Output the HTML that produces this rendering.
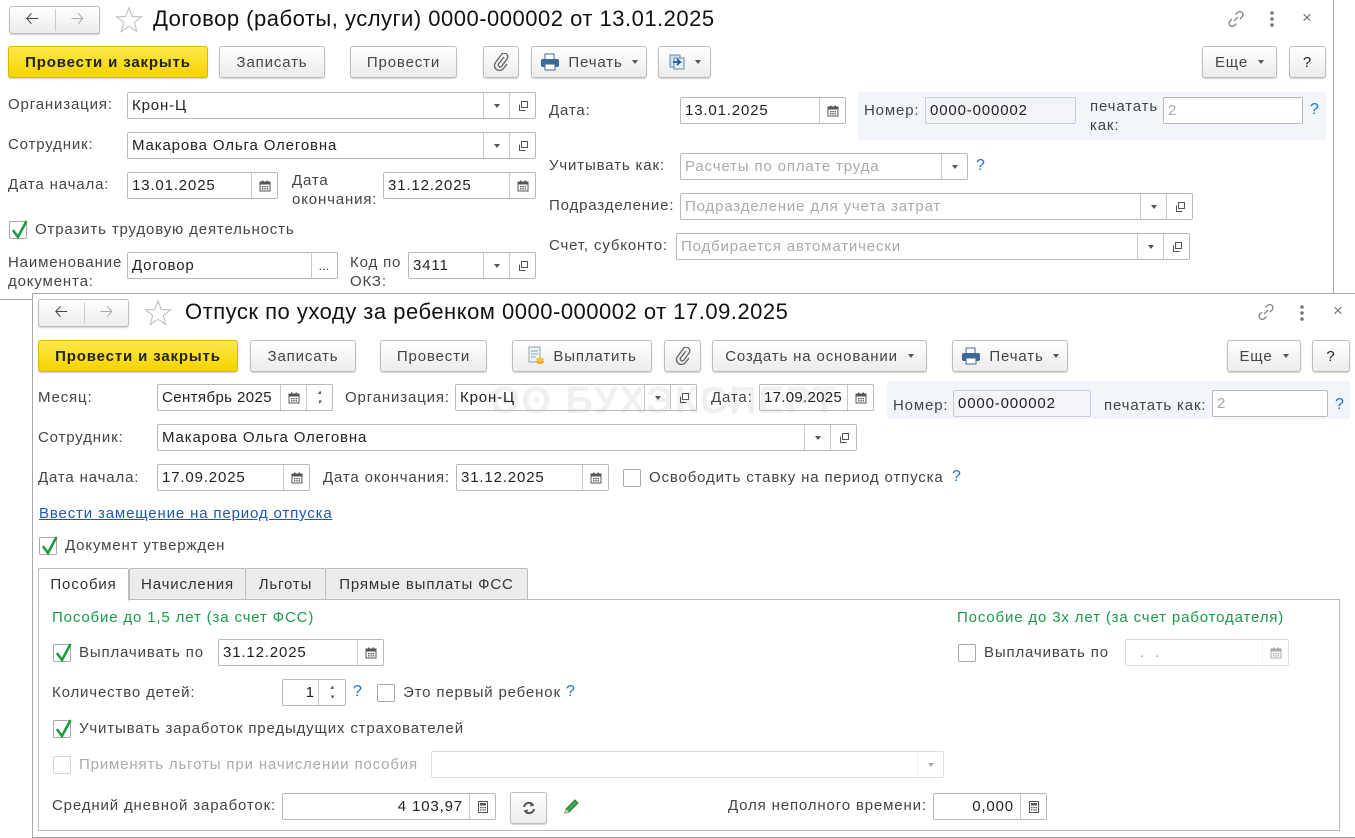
<!DOCTYPE html>
<html><head><meta charset="utf-8">
<style>
*{box-sizing:border-box;margin:0;padding:0}
body{width:1355px;height:829px;background:#fff;position:relative;overflow:hidden;font-family:"Liberation Sans",Arial,sans-serif;font-size:15px;color:#333;letter-spacing:0.85px}
.a{position:absolute;white-space:nowrap}
.win{position:absolute;background:#fff;border:1px solid #a8a8a8}
.b{position:absolute;height:32px;border:1px solid #bdbdbd;border-radius:3px;background:linear-gradient(#fff,#ececec);box-shadow:0 1px 1px rgba(0,0,0,.18);display:flex;align-items:center;justify-content:center;color:#444;font-size:15px}
.y{background:linear-gradient(#ffe94a,#f4d300);border-color:#d8b700;color:#222;font-weight:bold}
.f{position:absolute;height:27px;border:1px solid #b9b9b9;border-radius:2px;background:#fff;padding-left:4px;line-height:25px;color:#222;overflow:hidden;white-space:nowrap}
.f i{position:absolute;top:0;height:25px;width:26px;border-left:1px solid #c8c8c8;display:flex;align-items:center;justify-content:center;letter-spacing:0}
.ph{color:#aaa}
.cb{position:absolute;width:18px;height:18px;border:1px solid #a8a8a8;border-radius:2px;background:#fff}
.cb svg{position:absolute;left:1px;top:-3px}
.q{position:absolute;color:#1a73c8;font-size:16px}
.lab{position:absolute;color:#444;white-space:nowrap}
.grn{position:absolute;color:#1a9a4a;white-space:nowrap}
.dd{width:0;height:0;border-left:3.5px solid transparent;border-right:3.5px solid transparent;border-top:4px solid #555}
.tab{position:absolute;top:568px;height:32px;border:1px solid #bcbcbc;background:#ececec;display:flex;align-items:center;justify-content:center;color:#333;border-radius:2px 2px 0 0}
.tt{position:absolute;font-size:22px;color:#111;letter-spacing:0.5px;white-space:nowrap}
</style></head><body>

<svg width="0" height="0" style="position:absolute">
<defs>
<symbol id="cal" viewBox="0 0 12 12"><rect x="1" y="2" width="10" height="9" fill="#fff" stroke="#555"/><rect x="1" y="2" width="10" height="2.5" fill="#555"/><rect x="3" y="0.5" width="1.5" height="3" fill="#555"/><rect x="7.5" y="0.5" width="1.5" height="3" fill="#555"/><g fill="#555"><rect x="3" y="6" width="1.5" height="1.3"/><rect x="5.3" y="6" width="1.5" height="1.3"/><rect x="7.6" y="6" width="1.5" height="1.3"/><rect x="3" y="8.2" width="1.5" height="1.3"/><rect x="5.3" y="8.2" width="1.5" height="1.3"/><rect x="7.6" y="8.2" width="1.5" height="1.3"/></g></symbol>
<symbol id="op" viewBox="0 0 12 12"><rect x="4.5" y="1.5" width="6" height="6" fill="#fff" stroke="#555"/><path d="M2.5 4.5v6h6" fill="none" stroke="#555"/></symbol>
<symbol id="chk" viewBox="0 0 18 22"><path d="M2.5 12 L7 18 L15 3" fill="none" stroke="#1b9b3c" stroke-width="2.6" stroke-linecap="round"/></symbol>
<symbol id="clc" viewBox="0 0 12 12"><rect x="1.5" y="0.5" width="9" height="11" fill="#fff" stroke="#555"/><rect x="3" y="2" width="6" height="2.5" fill="#555"/><g fill="#555"><rect x="3" y="6" width="1.5" height="1.2"/><rect x="5.3" y="6" width="1.5" height="1.2"/><rect x="7.5" y="6" width="1.5" height="1.2"/><rect x="3" y="8.3" width="1.5" height="1.2"/><rect x="5.3" y="8.3" width="1.5" height="1.2"/><rect x="7.5" y="8.3" width="1.5" height="1.2"/></g></symbol>
<symbol id="prn" viewBox="0 0 20 18"><rect x="5" y="1" width="9" height="6" fill="#fff" stroke="#4a6a8a"/><rect x="1" y="6" width="18" height="8" rx="2" fill="#3a6a9a"/><rect x="5" y="11" width="10" height="6" fill="#fff" stroke="#4a6a8a"/></symbol>
<symbol id="clip" viewBox="0 0 16 18"><path d="M11 4 L5.5 11 a2 2 0 0 0 3 2.5 L14 6 a3.5 3.5 0 0 0 -5.5 -4.5 L2.5 9.5 a5 5 0 0 0 8 6 L14 11" fill="none" stroke="#666" stroke-width="1.4"/></symbol>
<symbol id="star" viewBox="0 0 28 28"><path d="M14 2 L17.3 10.5 L26.5 10.8 L19.3 16.5 L21.8 25.5 L14 20.3 L6.2 25.5 L8.7 16.5 L1.5 10.8 L10.7 10.5 Z" fill="none" stroke="#c4c4c4" stroke-width="1.2"/></symbol>
<symbol id="lnk" viewBox="0 0 20 20"><path d="M8 12 L12 8 M9.5 5.5 l2-2 a3 3 0 0 1 4.5 4.5 l-2 2 M10.5 14.5 l-2 2 a3 3 0 0 1 -4.5 -4.5 l2 -2" fill="none" stroke="#888" stroke-width="1.4"/></symbol>
</defs>
</svg>

<!-- WINDOW 1 -->
<div class="win" style="left:0;top:0;width:1334px;height:300px;border-top:none;border-left:none"></div>
<div class="b" style="left:9px;top:6px;width:91px;height:28px;padding:0"><span style="position:absolute;left:0;width:45px;text-align:center;font-size:17px;color:#444">&#129120;</span><span style="position:absolute;left:45px;top:2px;bottom:2px;border-left:1px solid #ccc"></span><span style="position:absolute;left:46px;width:44px;text-align:center;font-size:17px;color:#aaa">&#129122;</span></div>
<svg class="a" style="left:115px;top:6px" width="28" height="28"><use href="#star"/></svg>
<div class="tt" style="left:153px;top:6px">Договор (работы, услуги) 0000-000002 от 13.01.2025</div>
<svg class="a" style="left:1226px;top:9px" width="20" height="20"><use href="#lnk"/></svg>
<div class="a" style="left:1270px;top:10px;width:4px;height:18px;background:radial-gradient(circle,#777 1.6px,transparent 2px) 0 0/4px 6px"></div>
<div class="a" style="left:1302px;top:8px;font-size:17px;color:#777">×</div>

<div class="b y" style="left:8px;top:46px;width:200px">Провести и закрыть</div>
<div class="b" style="left:219px;top:46px;width:106px">Записать</div>
<div class="b" style="left:350px;top:46px;width:107px">Провести</div>
<div class="b" style="left:483px;top:46px;width:36px"><svg width="16" height="18"><use href="#clip"/></svg></div>
<div class="b" style="left:531px;top:46px;width:116px"><svg width="20" height="18" style="margin-right:8px"><use href="#prn"/></svg>Печать<span class="dd" style="margin-left:9px"></span></div>
<div class="b" style="left:658px;top:46px;width:53px"><svg width="16" height="16" style="margin-right:10px"><rect x="1" y="1" width="10" height="12" fill="#cfe0f0" stroke="#6a8ab0"/><rect x="5" y="4" width="10" height="11" fill="#e8f0f8" stroke="#6a8ab0"/><path d="M4 8h7l-3-3m3 3l-3 3" stroke="#1a5aa8" stroke-width="1.8" fill="none"/></svg><span class="dd"></span></div>
<div class="b" style="left:1202px;top:46px;width:75px">Еще<span class="dd" style="margin-left:10px"></span></div>
<div class="b" style="left:1289px;top:46px;width:37px;color:#222">?</div>

<div class="lab" style="left:8px;top:96px">Организация:</div>
<div class="f" style="left:127px;top:92px;width:409px">Крон-Ц<i style="right:26px"><span class="dd"></span></i><i style="right:0"><svg width="12" height="12"><use href="#op"/></svg></i></div>
<div class="lab" style="left:8px;top:136px">Сотрудник:</div>
<div class="f" style="left:127px;top:132px;width:409px">Макарова Ольга Олеговна<i style="right:26px"><span class="dd"></span></i><i style="right:0"><svg width="12" height="12"><use href="#op"/></svg></i></div>
<div class="lab" style="left:8px;top:176px">Дата начала:</div>
<div class="f" style="left:127px;top:172px;width:151px">13.01.2025<i style="right:0"><svg width="12" height="12"><use href="#cal"/></svg></i></div>
<div class="lab" style="left:292px;top:171px;line-height:19px">Дата<br>окончания:</div>
<div class="f" style="left:383px;top:172px;width:153px">31.12.2025<i style="right:0"><svg width="12" height="12"><use href="#cal"/></svg></i></div>
<div class="cb" style="left:9px;top:221px"><svg width="18" height="22"><use href="#chk"/></svg></div>
<div class="lab" style="left:35px;top:221px">Отразить трудовую деятельность</div>
<div class="lab" style="left:8px;top:253px;line-height:19px">Наименование<br>документа:</div>
<div class="f" style="left:127px;top:252px;width:211px">Договор<i style="right:0;font-size:13px;color:#444">...</i></div>
<div class="lab" style="left:350px;top:253px;line-height:19px">Код по<br>ОКЗ:</div>
<div class="f" style="left:408px;top:252px;width:128px">3411<i style="right:26px"><span class="dd"></span></i><i style="right:0"><svg width="12" height="12"><use href="#op"/></svg></i></div>

<div class="lab" style="left:549px;top:102px">Дата:</div>
<div class="f" style="left:680px;top:97px;width:166px">13.01.2025<i style="right:0"><svg width="12" height="12"><use href="#cal"/></svg></i></div>
<div class="a" style="left:858px;top:92px;width:468px;height:48px;background:#f2f5fa"></div>
<div class="lab" style="left:864px;top:102px">Номер:</div>
<div class="f" style="left:925px;top:97px;width:151px;background:#f2f4f7;border-color:#ccd">0000-000002</div>
<div class="lab" style="left:1090px;top:97px;line-height:19px">печатать<br>как:</div>
<div class="f" style="left:1163px;top:97px;width:140px"><span class="ph">2</span></div>
<div class="q" style="left:1310px;top:101px">?</div>
<div class="lab" style="left:549px;top:157px">Учитывать как:</div>
<div class="f" style="left:680px;top:153px;width:288px"><span class="ph">Расчеты по оплате труда</span><i style="right:0"><span class="dd"></span></i></div>
<div class="q" style="left:976px;top:157px">?</div>
<div class="lab" style="left:549px;top:197px">Подразделение:</div>
<div class="f" style="left:680px;top:193px;width:513px"><span class="ph">Подразделение для учета затрат</span><i style="right:26px"><span class="dd"></span></i><i style="right:0"><svg width="12" height="12"><use href="#op"/></svg></i></div>
<div class="lab" style="left:549px;top:237px">Счет, субконто:</div>
<div class="f" style="left:676px;top:233px;width:514px"><span class="ph">Подбирается автоматически</span><i style="right:26px"><span class="dd"></span></i><i style="right:0"><svg width="12" height="12"><use href="#op"/></svg></i></div>

<!-- WINDOW 2 -->
<div class="win" style="left:32px;top:293px;width:1330px;height:545px"></div>
<div class="b" style="left:38px;top:299px;width:91px;height:28px;padding:0"><span style="position:absolute;left:0;width:45px;text-align:center;font-size:17px;color:#444">&#129120;</span><span style="position:absolute;left:45px;top:2px;bottom:2px;border-left:1px solid #ccc"></span><span style="position:absolute;left:46px;width:44px;text-align:center;font-size:17px;color:#aaa">&#129122;</span></div>
<svg class="a" style="left:144px;top:299px" width="28" height="28"><use href="#star"/></svg>
<div class="tt" style="left:185px;top:299px">Отпуск по уходу за ребенком 0000-000002 от 17.09.2025</div>
<svg class="a" style="left:1256px;top:302px" width="20" height="20"><use href="#lnk"/></svg>
<div class="a" style="left:1300px;top:304px;width:4px;height:18px;background:radial-gradient(circle,#777 1.6px,transparent 2px) 0 0/4px 6px"></div>
<div class="a" style="left:1333px;top:301px;font-size:17px;color:#777">×</div>

<div class="b y" style="left:38px;top:340px;width:200px">Провести и закрыть</div>
<div class="b" style="left:250px;top:340px;width:106px">Записать</div>
<div class="b" style="left:380px;top:340px;width:107px">Провести</div>
<div class="b" style="left:512px;top:340px;width:140px"><svg width="18" height="20" style="margin-right:8px"><rect x="2" y="1" width="11" height="15" fill="#eef2f7" stroke="#8aa"/><path d="M4 5h7M4 8h7M4 11h5" stroke="#8aa"/><ellipse cx="13" cy="16" rx="4" ry="2" fill="#e8b020"/><ellipse cx="13" cy="13.5" rx="4" ry="2" fill="#f5c840"/></svg>Выплатить</div>
<div class="b" style="left:664px;top:340px;width:37px"><svg width="16" height="18"><use href="#clip"/></svg></div>
<div class="b" style="left:712px;top:340px;width:215px">Создать на основании<span class="dd" style="margin-left:10px"></span></div>
<div class="b" style="left:952px;top:340px;width:116px"><svg width="20" height="18" style="margin-right:8px"><use href="#prn"/></svg>Печать<span class="dd" style="margin-left:9px"></span></div>
<div class="b" style="left:1227px;top:340px;width:74px">Еще<span class="dd" style="margin-left:10px"></span></div>
<div class="b" style="left:1312px;top:340px;width:38px;color:#222">?</div>

<div class="a" style="left:490px;top:380px;font-size:38px;font-weight:bold;color:#f0f0f0;letter-spacing:2px">ʘʘ&nbsp;БУХЭКСПЕРТ</div>

<div class="lab" style="left:38px;top:389px">Месяц:</div>
<div class="f" style="left:157px;top:384px;width:176px;letter-spacing:0.4px">Сентябрь 2025<i style="right:26px"><svg width="12" height="12"><use href="#cal"/></svg></i><i style="right:0;flex-direction:column;font-size:7px;color:#555;line-height:10px">▴<br>▾</i></div>
<div class="lab" style="left:345px;top:389px">Организация:</div>
<div class="f" style="left:455px;top:384px;width:242px;background:transparent">Крон-Ц<i style="right:26px"><span class="dd"></span></i><i style="right:0"><svg width="12" height="12"><use href="#op"/></svg></i></div>
<div class="lab" style="left:711px;top:389px">Дата:</div>
<div class="f" style="left:759px;top:384px;width:115px;background:transparent;letter-spacing:0.3px">17.09.2025<i style="right:0"><svg width="12" height="12"><use href="#cal"/></svg></i></div>
<div class="a" style="left:887px;top:381px;width:463px;height:38px;background:#f2f5fa"></div>
<div class="lab" style="left:893px;top:397px">Номер:</div>
<div class="f" style="left:953px;top:390px;width:138px;background:#f2f4f7;border-color:#ccd">0000-000002</div>
<div class="lab" style="left:1104px;top:397px">печатать как:</div>
<div class="f" style="left:1212px;top:390px;width:116px"><span class="ph">2</span></div>
<div class="q" style="left:1335px;top:396px">?</div>

<div class="lab" style="left:38px;top:429px">Сотрудник:</div>
<div class="f" style="left:157px;top:424px;width:700px;background:transparent">Макарова Ольга Олеговна<i style="right:26px"><span class="dd"></span></i><i style="right:0"><svg width="12" height="12"><use href="#op"/></svg></i></div>
<div class="lab" style="left:38px;top:469px">Дата начала:</div>
<div class="f" style="left:157px;top:464px;width:153px">17.09.2025<i style="right:0"><svg width="12" height="12"><use href="#cal"/></svg></i></div>
<div class="lab" style="left:323px;top:469px">Дата окончания:</div>
<div class="f" style="left:456px;top:464px;width:153px">31.12.2025<i style="right:0"><svg width="12" height="12"><use href="#cal"/></svg></i></div>
<div class="cb" style="left:623px;top:469px"></div>
<div class="lab" style="left:649px;top:469px">Освободить ставку на период отпуска</div>
<div class="q" style="left:952px;top:468px">?</div>
<div class="a" style="left:39px;top:505px;color:#1c58b0;text-decoration:underline">Ввести замещение на период отпуска</div>
<div class="cb" style="left:39px;top:537px"><svg width="18" height="22"><use href="#chk"/></svg></div>
<div class="lab" style="left:65px;top:537px">Документ утвержден</div>

<div class="a" style="left:38px;top:599px;width:1302px;height:232px;border:1px solid #bcbcbc"></div>
<div class="tab" style="left:129px;width:117px">Начисления</div>
<div class="tab" style="left:245px;width:81px">Льготы</div>
<div class="tab" style="left:325px;width:203px">Прямые выплаты ФСС</div>
<div class="tab" style="left:38px;width:91px;background:#fff;border-bottom-color:#fff;height:33px">Пособия</div>

<div class="grn" style="left:52px;top:609px">Пособие до 1,5 лет (за счет ФСС)</div>
<div class="grn" style="left:957px;top:609px">Пособие до 3х лет (за счет работодателя)</div>
<div class="cb" style="left:53px;top:644px"><svg width="18" height="22"><use href="#chk"/></svg></div>
<div class="lab" style="left:79px;top:644px">Выплачивать по</div>
<div class="f" style="left:218px;top:639px;width:166px">31.12.2025<i style="right:0"><svg width="12" height="12"><use href="#cal"/></svg></i></div>
<div class="cb" style="left:958px;top:644px"></div>
<div class="lab" style="left:984px;top:644px">Выплачивать по</div>
<div class="f" style="left:1125px;top:639px;width:164px;border-color:#ddd;color:#999">&nbsp;&nbsp;.&nbsp;&nbsp;.<i style="right:0;border-color:#e4e4e4;opacity:.5"><svg width="12" height="12"><use href="#cal"/></svg></i></div>

<div class="lab" style="left:52px;top:684px">Количество детей:</div>
<div class="f" style="left:282px;top:679px;width:64px;text-align:right;padding-right:30px">1<i style="right:0;width:27px;flex-direction:column;font-size:7px;color:#555;line-height:10px">▴<br>▾</i></div>
<div class="q" style="left:353px;top:683px">?</div>
<div class="cb" style="left:377px;top:684px"></div>
<div class="lab" style="left:403px;top:684px">Это первый ребенок</div>
<div class="q" style="left:566px;top:683px">?</div>
<div class="cb" style="left:53px;top:720px"><svg width="18" height="22"><use href="#chk"/></svg></div>
<div class="lab" style="left:79px;top:720px">Учитывать заработок предыдущих страхователей</div>
<div class="cb" style="left:53px;top:756px;border-color:#d4d4d4"></div>
<div class="lab" style="left:79px;top:756px;color:#aaa">Применять льготы при начислении пособия</div>
<div class="f" style="left:431px;top:751px;width:513px;border-color:#ddd"><i style="right:0;border-color:#e4e4e4;opacity:.5"><span class="dd"></span></i></div>

<div class="lab" style="left:52px;top:797px">Средний дневной заработок:</div>
<div class="f" style="left:282px;top:793px;width:214px;text-align:right;padding-right:32px">4 103,97<i style="right:0"><svg width="12" height="12"><use href="#clc"/></svg></i></div>
<div class="b" style="left:510px;top:792px;width:37px"><svg width="14" height="14" viewBox="0 0 14 14"><path d="M2 6 A5 5 0 0 1 11 4 M12 8 A5 5 0 0 1 3 10" fill="none" stroke="#555" stroke-width="2"/><path d="M9 1 L12.5 4.5 L8 5.5Z M5 13 L1.5 9.5 L6 8.5Z" fill="#555"/></svg></div>
<svg class="a" style="left:561px;top:797px" width="20" height="20" viewBox="0 0 20 20"><path d="M4 16 L5 12 L14 3 L17 6 L8 15 Z" fill="#3aa84a" stroke="#2a7a3a"/><path d="M4 16 L5 12 L8 15Z" fill="#f0d0a0"/></svg>
<div class="lab" style="left:728px;top:797px">Доля неполного времени:</div>
<div class="f" style="left:933px;top:793px;width:114px;text-align:right;padding-right:32px">0,000<i style="right:0"><svg width="12" height="12"><use href="#clc"/></svg></i></div>

</body></html>
